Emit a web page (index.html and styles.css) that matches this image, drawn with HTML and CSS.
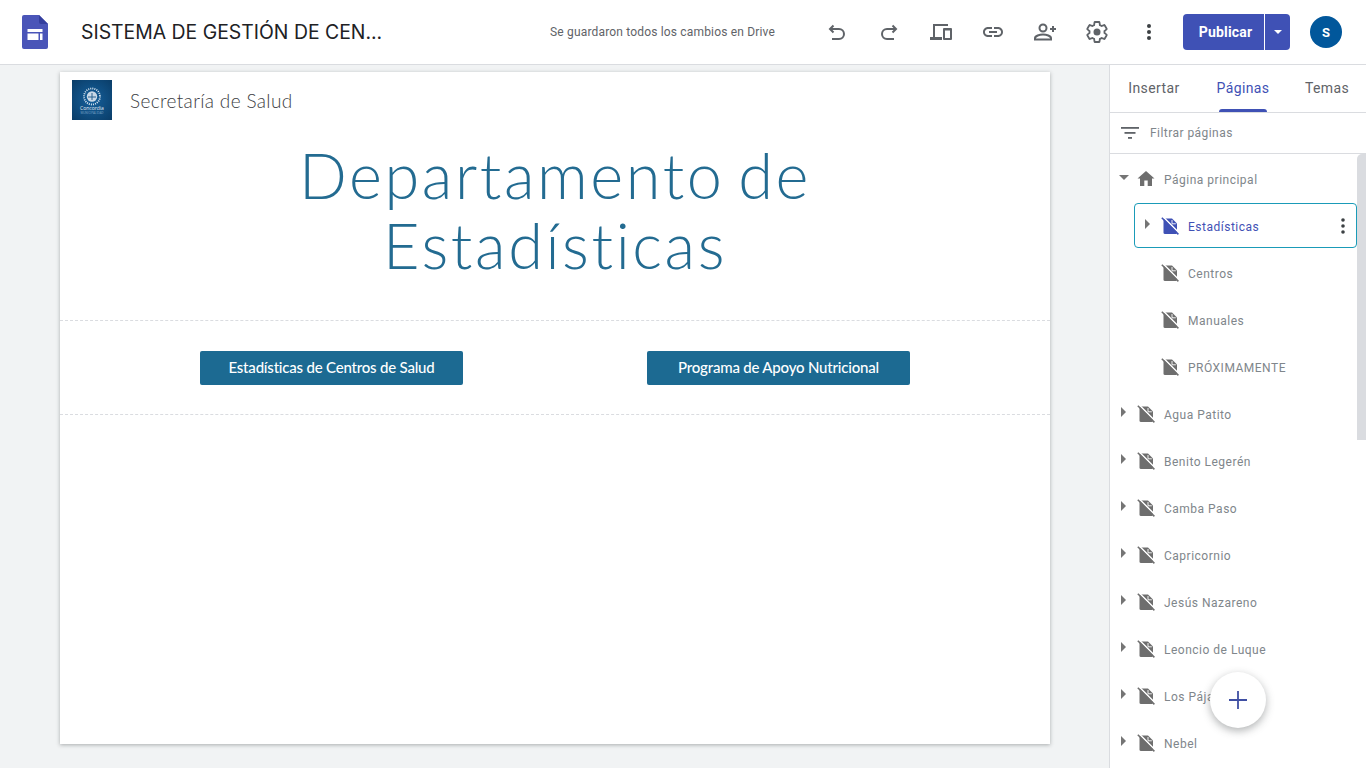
FILE: index.html
```html
<!DOCTYPE html>
<html lang="es">
<head>
  <meta charset="UTF-8" />
  <title>SISTEMA DE GESTIÓN DE CENTROS</title>
  <link rel="stylesheet" href="styles.css">
</head>
<body>

  <svg class="defs" width="0" height="0">
    <symbol id="page-off" viewBox="0 0 18 18">
      <path d="M2.500 1.500h8.500l5 5v9.300c0 .7-.5 1.200-1.200 1.200H3.700c-.7 0-1.200-.5-1.200-1.200z" fill="currentColor"/>
      <path d="M11 3v3.800h3.800" fill="none" stroke="#fff" stroke-width=".9"/>
      <path d="M2.200 0L18.700 16.500" stroke="#fff" stroke-width="1.600"/>
      <path d="M.8 .8L17.400 17.400" stroke="currentColor" stroke-width="1.500"/>
    </symbol>
  </svg>

  <header class="topbar">
    <svg class="sites-logo" width="26" height="34" viewBox="0 0 26 34">
      <path d="M2 0h15l9 9v23a2 2 0 0 1-2 2H2a2 2 0 0 1-2-2V2a2 2 0 0 1 2-2z" fill="#4a55b8"/>
      <path d="M17 0l9 9h-7a2 2 0 0 1-2-2z" fill="#343f9e"/>
      <path d="M5.500 14h15v3h-15zM5.500 18.500h11v6.500h-11zM18 18.500h2.500v6.500H18z" fill="#fff"/>
    </svg>
    <div class="doc-title">SISTEMA DE GESTIÓN DE CEN...</div>
    <div class="saved">Se guardaron todos los cambios en Drive</div>

    <div class="tools">
      <button class="tool" title="Deshacer">
        <svg width="24" height="24" viewBox="0 0 24 24" fill="none" stroke="currentColor" stroke-width="2">
          <path d="M8.500 5.500L5 9l3.500 3.500"/><path d="M5 9h9a5 5 0 0 1 0 10H7"/>
        </svg>
      </button>
      <button class="tool" title="Rehacer">
        <svg width="24" height="24" viewBox="0 0 24 24" fill="none" stroke="currentColor" stroke-width="2">
          <path d="M15.500 5.500L19 9l-3.500 3.500"/><path d="M19 9h-9a5 5 0 0 0 0 10h7"/>
        </svg>
      </button>
      <button class="tool" title="Vista previa">
        <svg width="24" height="24" viewBox="0 0 24 24" fill="currentColor">
          <path d="M4 4h15v2H6v11h7v3H1v-3h3z"/>
          <path d="M15 8h7a1 1 0 0 1 1 1v10a1 1 0 0 1-1 1h-7a1 1 0 0 1-1-1V9a1 1 0 0 1 1-1zm1 2.500V18h5v-7.500z" fill-rule="evenodd"/>
        </svg>
      </button>
      <button class="tool" title="Enlace">
        <svg width="24" height="24" viewBox="0 0 24 24" fill="currentColor">
          <path d="M3.900 12c0-1.710 1.390-3.100 3.100-3.100h4V7H7c-2.760 0-5 2.240-5 5s2.240 5 5 5h4v-1.900H7c-1.710 0-3.100-1.390-3.100-3.100zM8 13h8v-2H8v2zm9-6h-4v1.900h4c1.710 0 3.100 1.390 3.100 3.100s-1.390 3.100-3.100 3.100h-4V17h4c2.760 0 5-2.240 5-5s-2.240-5-5-5z"/>
        </svg>
      </button>
      <button class="tool" title="Compartir">
        <svg width="24" height="24" viewBox="0 0 24 24" fill="none" stroke="currentColor" stroke-width="2">
          <circle cx="10" cy="8" r="3.500"/>
          <path d="M2 19.500v-1.200c0-2.400 4.500-3.800 8-3.800s8 1.400 8 3.800v1.200z"/>
          <path d="M20 6v6M17 9h6"/>
        </svg>
      </button>
      <button class="tool" title="Configuración">
        <svg width="24" height="24" viewBox="0 0 24 24" fill="none" stroke="currentColor" stroke-width="1.800">
          <path d="M19.430 12.980c.04-.32.07-.64.07-.98s-.03-.66-.07-.98l2.110-1.650c.19-.15.24-.42.12-.64l-2-3.460c-.12-.22-.39-.3-.61-.22l-2.490 1c-.52-.4-1.080-.73-1.690-.98l-.38-2.650C14.460 2.180 14.250 2 14 2h-4c-.25 0-.46.18-.49.42l-.38 2.650c-.61.25-1.170.59-1.690.98l-2.490-1c-.23-.09-.49 0-.61.22l-2 3.460c-.13.22-.07.49.12.64l2.110 1.650c-.04.32-.07.65-.07.98s.03.66.07.98l-2.110 1.650c-.19.15-.24.42-.12.64l2 3.460c.12.22.39.3.61.22l2.490-1c.52.4 1.080.73 1.690.98l.38 2.650c.03.24.24.42.49.42h4c.25 0 .46-.18.49-.42l.38-2.650c.61-.25 1.170-.59 1.690-.98l2.490 1c.23.09.49 0 .61-.22l2-3.460c.12-.22.07-.49-.12-.64l-2.110-1.650z"/>
          <circle cx="12" cy="12" r="3.500" fill="currentColor" stroke="none"/>
        </svg>
      </button>
      <button class="tool" title="Más">
        <svg width="24" height="24" viewBox="0 0 24 24" fill="#3c4043">
          <circle cx="12" cy="6" r="2"/><circle cx="12" cy="12" r="2"/><circle cx="12" cy="18" r="2"/>
        </svg>
      </button>
    </div>

    <div class="publish">
      <button class="publish-main">Publicar</button>
      <button class="publish-arrow"><span class="caret-down white"></span></button>
    </div>
    <div class="avatar">S</div>
  </header>

  <main class="workspace">
    <div class="canvas">
      <div class="site-page">
        <div class="site-head">
          <svg class="site-logo" width="40" height="40" viewBox="0 0 40 40">
            <defs>
              <radialGradient id="logo-bg" cx="50%" cy="50%" r="70%">
                <stop offset="0" stop-color="#15609c"/>
                <stop offset="1" stop-color="#0a3d68"/>
              </radialGradient>
            </defs>
            <rect width="40" height="40" fill="url(#logo-bg)"/>
            <circle cx="20" cy="16.500" r="8" fill="none" stroke="#dfe9f2" stroke-width="1.800" stroke-dasharray="1 1.100"/>
            <circle cx="20" cy="16.500" r="5.200" fill="#c9d8e6"/>
            <path d="M16 17h8M20 13v7" stroke="#2a628f" stroke-width="1"/>
            <text class="logo-big" x="20" y="30" text-anchor="middle">Concordia</text>
            <text class="logo-small" x="20" y="33.500" text-anchor="middle">MUNICIPALIDAD</text>
          </svg>
          <div class="site-name">Secretaría de Salud</div>
        </div>
        <section class="hero">
          <h1>Departamento de<br>Estadísticas</h1>
        </section>
        <section class="links">
          <div class="link-cell"><a class="link-btn">Estadísticas de Centros de Salud</a></div>
          <div class="link-cell"><a class="link-btn">Programa de Apoyo Nutricional</a></div>
        </section>
      </div>
    </div>

    <aside class="panel">
      <nav class="tabs">
        <div class="tab">Insertar</div>
        <div class="tab active">Páginas</div>
        <div class="tab">Temas</div>
      </nav>
      <div class="filter">
        <svg width="18" height="12" viewBox="0 0 18 12" fill="#5f6368">
          <rect x="0" y="0" width="18" height="1.800"/><rect x="3.500" y="5" width="11" height="1.800"/><rect x="7" y="10" width="4" height="1.800"/>
        </svg>
        <span>Filtrar páginas</span>
      </div>
      <ul class="tree">
        <li class="row">
          <span class="caret-down"></span>
          <svg class="row-icon" width="18" height="18" viewBox="0 0 18 18" fill="currentColor"><path d="M7.300 16v-5.500h3.400V16h4.300V8.500h2.500L9 1 .5 8.500H3V16z"/></svg>
          <span class="row-label">Página principal</span>
        </li>
        <li class="row sub selected">
          <span class="caret-right"></span>
          <svg class="row-icon" width="18" height="18"><use href="#page-off"/></svg>
          <span class="row-label">Estadísticas</span>
          <svg class="row-more" width="4" height="16" viewBox="0 0 4 16" fill="#3c4043"><circle cx="2" cy="2" r="1.800"/><circle cx="2" cy="8" r="1.800"/><circle cx="2" cy="14" r="1.800"/></svg>
        </li>
        <li class="row sub"><span class="caret-none"></span><svg class="row-icon" width="18" height="18"><use href="#page-off"/></svg><span class="row-label">Centros</span></li>
        <li class="row sub"><span class="caret-none"></span><svg class="row-icon" width="18" height="18"><use href="#page-off"/></svg><span class="row-label">Manuales</span></li>
        <li class="row sub"><span class="caret-none"></span><svg class="row-icon" width="18" height="18"><use href="#page-off"/></svg><span class="row-label">PRÓXIMAMENTE</span></li>
        <li class="row"><span class="caret-right"></span><svg class="row-icon" width="18" height="18"><use href="#page-off"/></svg><span class="row-label">Agua Patito</span></li>
        <li class="row"><span class="caret-right"></span><svg class="row-icon" width="18" height="18"><use href="#page-off"/></svg><span class="row-label">Benito Legerén</span></li>
        <li class="row"><span class="caret-right"></span><svg class="row-icon" width="18" height="18"><use href="#page-off"/></svg><span class="row-label">Camba Paso</span></li>
        <li class="row"><span class="caret-right"></span><svg class="row-icon" width="18" height="18"><use href="#page-off"/></svg><span class="row-label">Capricornio</span></li>
        <li class="row"><span class="caret-right"></span><svg class="row-icon" width="18" height="18"><use href="#page-off"/></svg><span class="row-label">Jesús Nazareno</span></li>
        <li class="row"><span class="caret-right"></span><svg class="row-icon" width="18" height="18"><use href="#page-off"/></svg><span class="row-label">Leoncio de Luque</span></li>
        <li class="row"><span class="caret-right"></span><svg class="row-icon" width="18" height="18"><use href="#page-off"/></svg><span class="row-label">Los Pájaros</span></li>
        <li class="row"><span class="caret-right"></span><svg class="row-icon" width="18" height="18"><use href="#page-off"/></svg><span class="row-label">Nebel</span></li>
      </ul>
      <div class="scroll-thumb"></div>
      <button class="fab">
        <svg width="18" height="18" viewBox="0 0 18 18" stroke="#3f4fa3" stroke-width="1.800"><path d="M9 0v18M0 9h18"/></svg>
      </button>
    </aside>
  </main>

</body>
</html>
```

FILE: styles.css
```css
* {
  box-sizing: border-box;
}

html, body {
  height: 100%;
}

body {
  margin: 0;
  height: 768px;
  overflow: hidden;
  display: flex;
  flex-direction: column;
  font-family: Roboto, sans-serif;
  background: #f1f3f4;
}

button {
  border: none;
  background: none;
  padding: 0;
  font-family: inherit;
  cursor: pointer;
}

.defs {
  position: absolute;
}

/* top bar */
.topbar {
  height: 65px;
  flex: none;
  display: flex;
  align-items: center;
  background: #fff;
  border-bottom: 1px solid #dadce0;
  padding: 0 24px 0 22px;
}

.sites-logo {
  flex: none;
  margin-bottom: 1px;
}

.doc-title {
  margin-left: 33px;
  font-family: Inter, sans-serif;
  font-size: 19.4px;
  color: #202124;
  white-space: nowrap;
}

.saved {
  margin-left: auto;
  margin-right: 36px;
  font-size: 12px;
  letter-spacing: 0.17px;
  color: #5f6368;
  white-space: nowrap;
}

.tools {
  display: flex;
}

.tool {
  width: 52px;
  height: 40px;
  display: flex;
  align-items: center;
  justify-content: center;
  color: #5f6368;
}

.publish {
  display: flex;
  margin-left: 8px;
  height: 36px;
  width: 107px;
}

.publish-main {
  width: 81px;
  padding-left: 4px;
  background: #3f51b5;
  color: #fff;
  font-size: 14px;
  font-weight: 700;
  letter-spacing: 0.2px;
  border-radius: 4px 0 0 4px;
}

.publish-arrow {
  width: 25px;
  margin-left: 1px;
  background: #3f51b5;
  border-radius: 0 4px 4px 0;
  display: flex;
  align-items: center;
  justify-content: center;
}

.avatar {
  width: 32px;
  height: 32px;
  margin-left: 20px;
  border-radius: 50%;
  background: #01579b;
  color: #fff;
  font-size: 13px;
  font-weight: 700;
  display: flex;
  align-items: center;
  justify-content: center;
}

.caret-down {
  width: 0;
  height: 0;
  border-left: 5px solid transparent;
  border-right: 5px solid transparent;
  border-top: 5px solid #757575;
}

.caret-down.white {
  border-left-width: 4px;
  border-right-width: 4px;
  border-top: 4px solid #fff;
}

/* editor area */
.workspace {
  flex: 1;
  display: flex;
  min-height: 0;
}

.canvas {
  flex: 1;
  padding: 7px 59px 0 60px;
}

.site-page {
  height: 672px;
  background: #fff;
  box-shadow: 0 1px 4px rgba(60, 64, 67, 0.4);
}

.site-head {
  display: flex;
  align-items: center;
  padding: 8px 12px 0;
  height: 48px;
}

.logo-big {
  font-family: "Open Sans", sans-serif;
  font-size: 5px;
  fill: #e6eef5;
}

.logo-small {
  font-family: "Open Sans", sans-serif;
  font-size: 3px;
  fill: #7fa6c6;
}

.site-name {
  margin-left: 18px;
  font-family: Lato, sans-serif;
  font-weight: 300;
  font-size: 19px;
  letter-spacing: 0.35px;
  color: #3c4043;
}

.hero {
  height: 201px;
  padding-top: 20px;
  border-bottom: 1px dashed #dadce0;
}

h1 {
  margin: 0;
  text-align: center;
  font-family: Lato, sans-serif;
  font-weight: 300;
  font-size: 63px;
  line-height: 70px;
  letter-spacing: 2.6px;
  word-spacing: -6px;
  color: #236b91;
}

.links {
  height: 94px;
  padding: 0 48px;
  display: grid;
  grid-template-columns: 1fr 1fr;
  align-items: center;
  border-bottom: 1px dashed #dadce0;
}

.link-cell {
  display: flex;
  justify-content: center;
}

.link-btn {
  width: 263px;
  height: 34px;
  padding-bottom: 2px;
  display: flex;
  align-items: center;
  justify-content: center;
  background: #1c6a92;
  border-radius: 2px;
  color: #fff;
  font-family: Lato, sans-serif;
  font-size: 15px;
  font-weight: 500;
  letter-spacing: -0.2px;
}

/* right panel */
.panel {
  position: relative;
  width: 257px;
  flex: none;
  background: #fff;
  border-left: 1px solid #dadce0;
  overflow: hidden;
}

.tabs {
  display: grid;
  grid-template-columns: 88px 90px 78px;
  height: 48px;
  border-bottom: 1px solid #dadce0;
}

.tab {
  position: relative;
  display: flex;
  align-items: center;
  justify-content: center;
  padding-bottom: 1px;
  font-size: 14px;
  letter-spacing: 0.4px;
  color: #5f6368;
}

.tab.active {
  color: #3f51b5;
}

.tab.active::after {
  content: "";
  position: absolute;
  left: 21px;
  right: 21px;
  bottom: 0;
  height: 3px;
  background: #3f51b5;
  border-radius: 3px 3px 0 0;
}

.filter {
  height: 41px;
  display: flex;
  align-items: center;
  gap: 11px;
  padding-left: 11px;
  border-bottom: 1px solid #dadce0;
  font-size: 12px;
  letter-spacing: 0.45px;
  color: #80868b;
}

.tree {
  list-style: none;
  margin: 0;
  padding: 2px 9px 0 0;
}

.row {
  height: 45px;
  margin-bottom: 2px;
  display: flex;
  align-items: center;
  padding: 2px 0 0 8px;
  border: 1px solid transparent;
  border-left: none;
  border-radius: 4px;
  color: #6e6e6e;
}

.row.sub {
  margin-left: 24px;
  border-left: 1px solid transparent;
  padding-left: 7px;
}

.row.selected {
  border-color: #1a9bb8;
  color: #3f51b5;
}

.row .caret-down,
.row .caret-right,
.caret-none {
  flex: none;
  margin-bottom: 5px;
}

.row .caret-down {
  margin-left: 1px;
  margin-right: 1px;
}

.caret-right {
  width: 0;
  height: 0;
  margin-left: 3px;
  margin-right: 4px;
  border-top: 5px solid transparent;
  border-bottom: 5px solid transparent;
  border-left: 5px solid #757575;
}

.caret-none {
  width: 12px;
}

.row-icon {
  flex: none;
  margin-left: 7px;
  margin-bottom: 2px;
}

.row-label {
  margin-left: 9px;
  font-size: 12px;
  letter-spacing: 0.5px;
  color: #80868b;
  white-space: nowrap;
}

.selected .row-label {
  color: #3f51b5;
}

.row-more {
  margin-left: auto;
  margin-right: 11px;
  margin-bottom: 2px;
}

.scroll-thumb {
  position: absolute;
  top: 89px;
  right: 0;
  width: 9px;
  height: 286px;
  background: #dadce0;
  border-radius: 5px 0 0 0;
}

.fab {
  position: absolute;
  left: 100px;
  top: 607px;
  width: 56px;
  height: 56px;
  border-radius: 50%;
  background: #fff;
  display: flex;
  align-items: center;
  justify-content: center;
  box-shadow: 0 3px 8px rgba(60, 64, 67, 0.4);
}
```
